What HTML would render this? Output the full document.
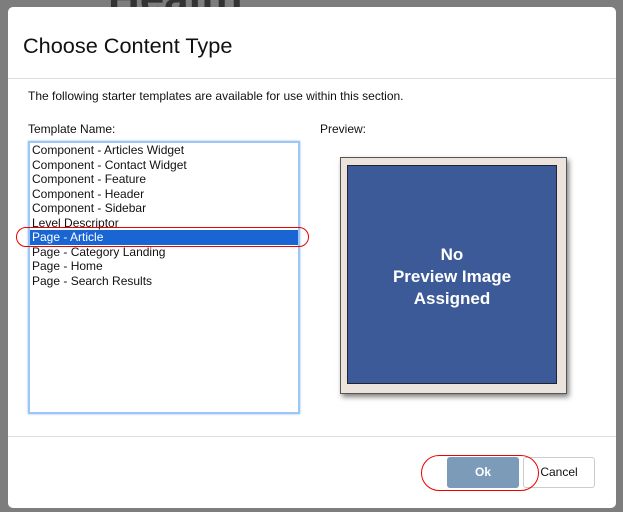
<!DOCTYPE html>
<html><head><style>
body{margin:0;width:623px;height:512px;background:#7d7d7d;position:relative;overflow:hidden;font-family:"Liberation Sans",Arial,sans-serif;}
.bgtxt{position:absolute;left:108px;top:-26px;font-size:44px;font-weight:bold;color:#333;}
.dlg{position:absolute;left:8px;top:7px;width:608px;height:501px;background:#fff;border-radius:5px;}
.a{position:absolute;}
h1{position:absolute;left:15px;top:26px;margin:0;font-weight:normal;font-size:21.7px;color:#111;}
.list{position:absolute;left:20px;top:134px;width:268px;height:269px;border:2px solid #9cc6f4;box-shadow:0 0 2px #8ab8ee;background:#fff;}
.item{height:14.5px;line-height:14.5px;font-size:12px;padding-left:2px;color:#111;white-space:nowrap;}
.sel{background:#1a65d4;color:#fff;}
</style></head><body>
<div class="bgtxt">Health</div>
<div class="dlg">
<h1>Choose Content Type</h1>
<div class="a" style="left:0;top:71px;width:608px;height:1px;background:#ddd"></div>
<div class="a" style="left:20px;top:82px;font-size:12px;color:#111">The following starter templates are available for use within this section.</div>
<div class="a" style="left:20px;top:115px;font-size:12px;color:#111">Template Name:</div>
<div class="a" style="left:312px;top:115px;font-size:12px;color:#111">Preview:</div>
<div class="list">
<div class="item">Component - Articles Widget</div>
<div class="item">Component - Contact Widget</div>
<div class="item">Component - Feature</div>
<div class="item">Component - Header</div>
<div class="item">Component - Sidebar</div>
<div class="item">Level Descriptor</div>
<div class="item sel">Page - Article</div>
<div class="item">Page - Category Landing</div>
<div class="item">Page - Home</div>
<div class="item">Page - Search Results</div>
</div>
<div class="a" style="left:8px;top:220px;width:291px;height:18px;border:1.5px solid #e00;border-radius:10px"></div>
<div class="a" style="left:332px;top:150px;width:225px;height:235px;background:#ece4dc;border:1px solid #555;box-shadow:2px 3px 5px rgba(0,0,0,.5)"></div>
<div class="a" style="left:339px;top:158px;width:210px;height:219px;background:#3c5a98;border:1px solid #223;color:#fff;font-weight:bold;font-size:17px;text-align:center;display:flex;align-items:center;justify-content:center;line-height:22px;padding-top:4px;box-sizing:border-box">No<br>Preview Image<br>Assigned</div>
<div class="a" style="left:0;top:429px;width:608px;height:1px;background:#ddd"></div>
<div class="a" style="left:439px;top:450px;width:72px;height:31px;background:#7b9bb8;border-radius:3px;color:#fff;font-size:12px;font-weight:bold;text-align:center;line-height:31px">Ok</div>
<div class="a" style="left:515px;top:450px;width:70px;height:29px;border:1px solid #ccc;border-radius:3px;font-size:12px;text-align:center;line-height:29px;color:#111">Cancel</div>
<div class="a" style="left:413px;top:448px;width:116px;height:34px;border:1.5px solid #e00;border-radius:18px"></div>
</div>
</body></html>
